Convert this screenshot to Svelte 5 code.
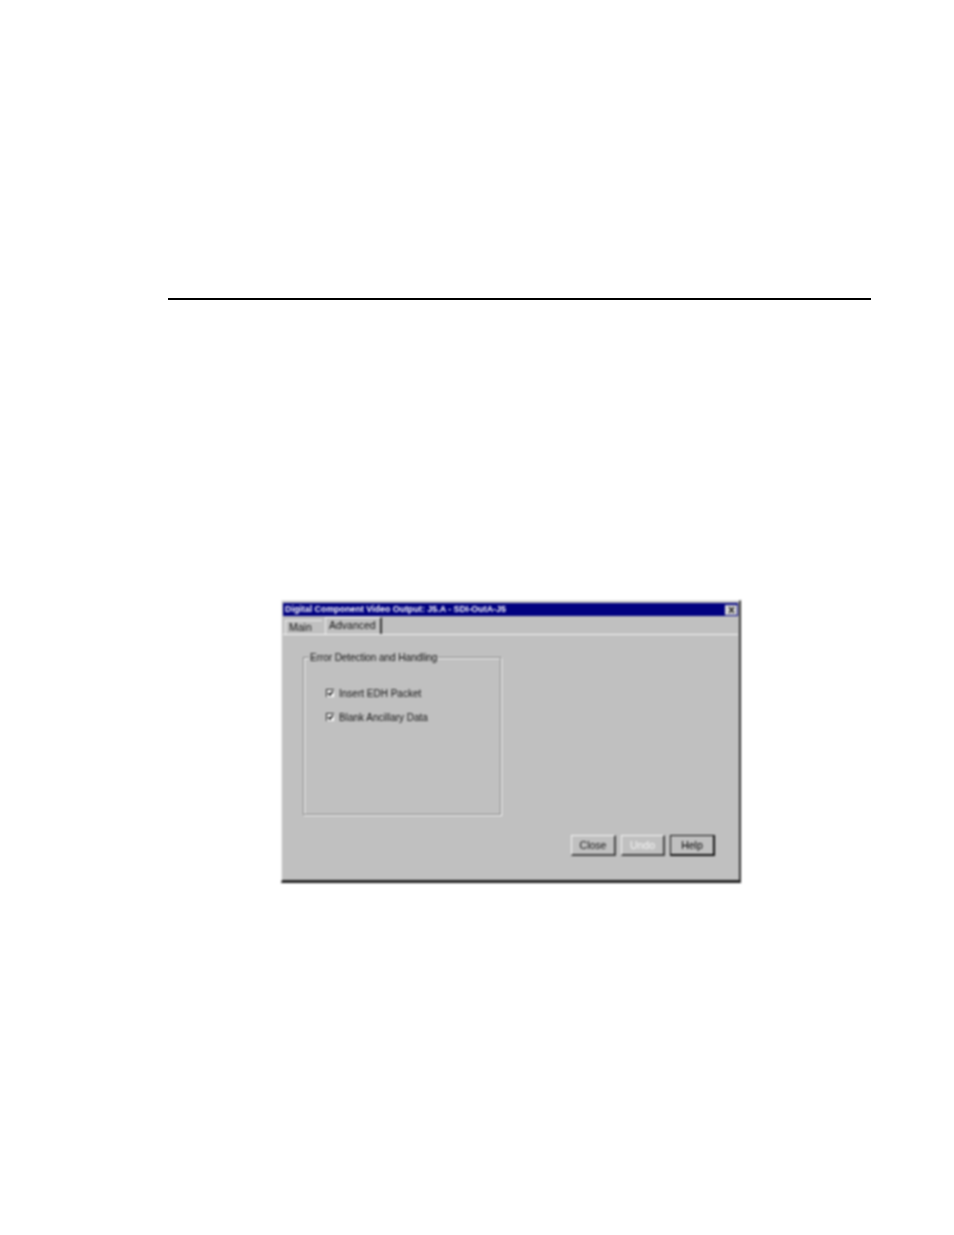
<script lang="ts">
  const options = ['Insert EDH Packet', 'Blank Ancillary Data'];
</script>

<div class="page">
  <hr class="rule" />

  <div class="dialog">
    <div class="titlebar">
      <span>Digital Component Video Output: J5.A - SDI-OutA-J5</span>
      <span class="close-box">
        <svg width="9" height="8" viewBox="0 0 9 8"><path d="M2 1l5 6M7 1L2 7" stroke="#222" stroke-width="1.5" fill="none" /></svg>
      </span>
    </div>

    <div class="tabs">
      <div class="tab">Main</div>
      <div class="tab active">Advanced</div>
    </div>

    <div class="body">
      <fieldset class="group">
        <legend>Error Detection and Handling</legend>
        {#each options as opt}
          <div class="option">
            <span class="check">
              <svg width="7" height="7" viewBox="0 0 7 7"><path d="M1 3l2 2 3-4" stroke="#111" stroke-width="1.6" fill="none" /></svg>
            </span>
            <span>{opt}</span>
          </div>
        {/each}
      </fieldset>

      <div class="buttons">
        <div class="btn">Close</div>
        <div class="btn disabled">Undo</div>
        <div class="btn focused">Help</div>
      </div>
    </div>
  </div>
</div>

<style>
  :global(body) {
    margin: 0;
    background: #fff;
  }

  .page {
    width: 954px;
    height: 1235px;
    box-sizing: border-box;
    padding-top: 298px;
    font-family: "Liberation Sans", Arial, sans-serif;
    overflow: hidden;
  }

  .rule {
    width: 703px;
    height: 2px;
    margin: 0 0 0 168px;
    border: 0;
    background: #000;
  }

  .dialog {
    box-sizing: border-box;
    width: 460px;
    height: 283px;
    margin: 300px 0 0 281px;
    padding: 2px 1px 0 1px;
    background: #c0c0c0;
    border-top: 1px solid #f0f0f0;
    border-left: 1px solid #f0f0f0;
    border-right: 2px solid #333;
    border-bottom: 3px solid #222;
    filter: blur(0.8px);
    display: flex;
    flex-direction: column;
  }

  .titlebar {
    height: 13px;
    flex: none;
    background: #000080;
    color: #fff;
    font-size: 8.9px;
    font-weight: 700;
    line-height: 13px;
    padding: 0 1px 0 2px;
    display: flex;
    justify-content: space-between;
    align-items: center;
    white-space: nowrap;
  }

  .close-box {
    width: 12px;
    height: 10px;
    background: #d8d8d8;
    display: flex;
    align-items: center;
    justify-content: center;
  }

  .tabs {
    height: 18px;
    flex: none;
    display: flex;
    align-items: flex-end;
    gap: 3px;
    padding-left: 2px;
    border-bottom: 1px solid #f6f6f6;
    font-size: 10.5px;
    color: #111;
  }

  .tab {
    box-sizing: border-box;
    width: 37px;
    height: 14px;
    padding-left: 3px;
    line-height: 13px;
    border-top: 1px solid #f0f0f0;
    border-left: 1px solid #f0f0f0;
  }

  .tab.active {
    width: 57px;
    height: 17px;
    padding-left: 3px;
    line-height: 14px;
    border-right: 2px solid #333;
  }

  .body {
    flex: 1;
    display: flex;
    flex-direction: column;
    padding: 15px 0 0 20px;
  }

  .group {
    box-sizing: border-box;
    width: 198px;
    height: 165px;
    margin: 0;
    padding: 23px 0 0 22px;
    border: 1px solid #808080;
    box-shadow: 1px 1px 0 #fff, inset 1px 1px 0 #fff;
  }

  legend {
    margin-left: -17px;
    padding: 2px 1px 0;
    font-size: 10.1px;
    line-height: 12px;
    letter-spacing: -0.1px;
    color: #111;
    background: #c0c0c0;
  }

  .option {
    display: flex;
    align-items: center;
    gap: 5px;
    height: 12px;
    margin-bottom: 12px;
    font-size: 10px;
    color: #111;
  }

  .check {
    box-sizing: border-box;
    width: 8px;
    height: 8px;
    background: #fff;
    border-top: 1px solid #222;
    border-left: 1px solid #222;
    display: flex;
    align-items: center;
    justify-content: center;
  }

  .buttons {
    display: flex;
    gap: 5px;
    margin: 20px 0 0 268px;
  }

  .btn {
    box-sizing: border-box;
    width: 45px;
    height: 21px;
    font-size: 10.5px;
    line-height: 19px;
    text-align: center;
    color: #111;
    border-top: 1px solid #f6f6f6;
    border-left: 1px solid #f6f6f6;
    border-right: 2px solid #444;
    border-bottom: 2px solid #444;
  }

  .btn.disabled {
    width: 44px;
    color: #f6f6f6;
  }

  .btn.focused {
    border: 1px solid #111;
    border-right-width: 2px;
    border-bottom-width: 2px;
    color: #000;
  }
</style>
